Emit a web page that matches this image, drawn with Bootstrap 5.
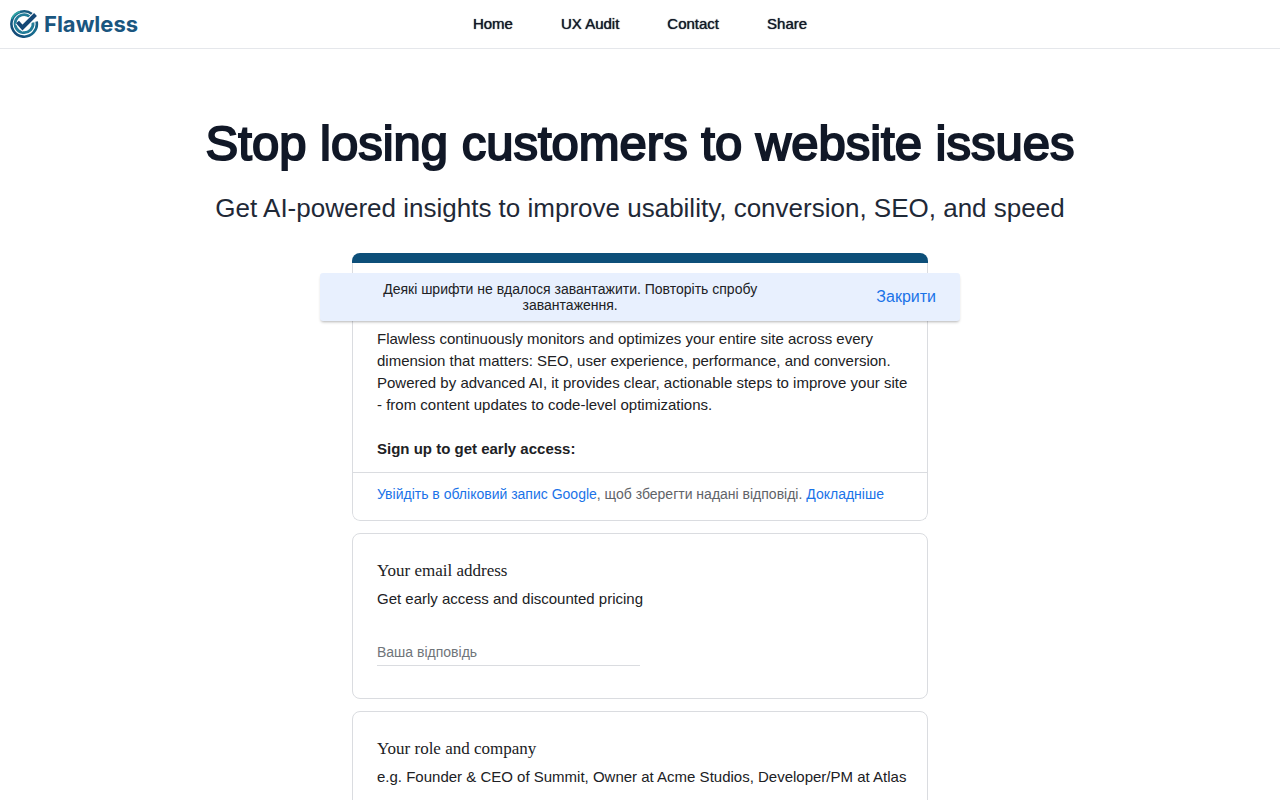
<!DOCTYPE html>
<html lang="en">
<head>
<meta charset="utf-8">
<meta name="viewport" content="width=device-width, initial-scale=1">
<title>Flawless</title>
<link href="https://cdn.jsdelivr.net/npm/bootstrap@5.3.0/dist/css/bootstrap.min.css" rel="stylesheet">
<style>
  body { font-family: "Liberation Sans", Arial, sans-serif; color: #202124; }
  .site-header { min-height: 49px; border-color: #e5e7eb !important; }
  .brand-logo { height: 30px; color: #1a567f; font: bold 22px/30px "Inter", sans-serif; text-decoration: none; }
  .site-nav { gap: 48px; }
  .site-nav a { color: #111827; font-size: 15px; line-height: 24px; text-decoration: none; text-shadow: 0 0 1px #111827; }
  .hero { padding-top: 64px; }
  .hero h1 { font-size: 49px; line-height: 60px; font-weight: 400; color: #111827; -webkit-text-stroke: 2px #111827; }
  .hero p { font-size: 26px; line-height: 38px; color: #1f2937; padding-bottom: 26px; }
  .form-column { max-width: 640px; }
  .form-cards { padding: 0 32px; display: grid; gap: 12px; }
  .form-panel { border: 1px solid #dadce0; border-radius: 8px; }
  .intro-panel { border: 0; overflow: hidden; }
  .intro-panel::before { content: ""; display: block; height: 10px; background: #0d4f79; }
  .intro-body { border: 1px solid #dadce0; border-top: 0; border-radius: 0 0 8px 8px; }
  .intro-copy { padding: 65px 16px 12px 24px; font-size: 15px; line-height: 22px; }
  .signin { padding: 10px 24px 14px; border-color: #dadce0 !important; font-size: 14px; line-height: 23px; color: #5f6368; }
  .signin a, .notice button { color: #1a73e8; text-decoration: none; }
  .question { padding: 24px 16px 32px 24px; }
  .question label { font: 17px/26px "Liberation Serif", serif; }
  .question p { font-size: 15px; line-height: 22px; margin: 4px 0 30px; }
  .question input { width: 263px; max-width: 100%; border: 0; border-bottom: 1px solid #dadce0; font-size: 14px; line-height: 24px; padding: 0 0 1px; color: #202124; background: transparent; }
  .question input::placeholder { color: #70757a; opacity: 1; }
  .notice { top: 20px; min-height: 48px; background: #e8f0fe; border-radius: 3px; box-shadow: 0 2px 3px -1px rgba(0,0,0,.3); font-size: 14px; line-height: 16px; padding: 0 24px; }
  .notice-text { padding: 0 116px 0 36px; }
  .notice button { font-size: 16px; line-height: 24px; }
</style>
</head>
<body>
<header class="site-header border-bottom d-grid align-items-center position-relative">
  <nav class="site-nav d-flex justify-content-center" aria-label="Main">
    <a href="#">Home</a><a href="#">UX Audit</a><a href="#">Contact</a><a href="#">Share</a>
  </nav>
  <a href="#" class="brand-logo d-flex align-items-center position-absolute start-0 ms-2">
    <svg width="32" height="30" viewBox="0 0 32 30" fill="none" aria-hidden="true">
      <defs><linearGradient id="ring" x1="0" y1="1" x2="1" y2="0"><stop stop-color="#123f70"/><stop offset=".55" stop-color="#176f91"/><stop offset="1" stop-color="#17486f"/></linearGradient></defs>
      <path d="M24 5A12.7 12.700 0 1 0 28.600 12.500" stroke="url(#ring)" stroke-width="2.600"/>
      <path d="M21.500 7.500A9 9 0 1 0 25 13.500" stroke="#227c98" stroke-width="2.800"/>
      <path d="M3.500 10A12.700 12.700 0 0 1 12 2.700" stroke="#32a7a5" stroke-width="1.600"/>
      <path d="M9.500 13L14.500 18.500L27.500 5.500" stroke="#fff" stroke-width="6"/>
      <path d="M9.500 13L14.500 18.500L27.500 5.500" stroke="#154876" stroke-width="4"/>
    </svg>
    <span class="ps-1">Flawless</span>
  </a>
</header>
<main>
  <section class="hero text-center">
    <h1 class="m-0">Stop losing customers to website issues</h1>
    <p class="m-0 pt-3">Get AI-powered insights to improve usability, conversion, SEO, and speed</p>
  </section>
  <form class="form-column mx-auto position-relative">
    <div class="form-cards">
      <section class="form-panel intro-panel">
        <div class="intro-body">
          <div class="intro-copy">
            <p class="m-0">Flawless continuously monitors and optimizes your entire site across every dimension that matters: SEO, user experience, performance, and conversion. Powered by advanced AI, it provides clear, actionable steps to improve your site - from content updates to code-level optimizations.</p>
            <br>
            <strong>Sign up to get early access:</strong>
          </div>
          <div class="signin border-top" lang="uk"><a href="#">Увійдіть в обліковий запис Google</a>, щоб зберегти надані відповіді. <a href="#">Докладніше</a></div>
        </div>
      </section>
      <section class="form-panel question">
        <label for="email" class="d-block">Your email address</label>
        <p id="email-help">Get early access and discounted pricing</p>
        <input id="email" type="text" class="d-block" placeholder="Ваша відповідь" aria-describedby="email-help">
      </section>
      <section class="form-panel question">
        <label for="role" class="d-block">Your role and company</label>
        <p id="role-help">e.g. Founder &amp; CEO of Summit, Owner at Acme Studios, Developer/PM at Atlas</p>
        <input id="role" type="text" class="d-block" placeholder="Ваша відповідь" aria-describedby="role-help">
      </section>
    </div>
    <div class="notice position-absolute start-0 w-100 d-flex align-items-center" role="alert" lang="uk">
      <span class="notice-text flex-grow-1 text-center">Деякі шрифти не вдалося завантажити. Повторіть спробу завантаження.</span>
      <button type="button" class="btn p-0 border-0">Закрити</button>
    </div>
  </form>
</main>
<script src="https://cdn.jsdelivr.net/npm/bootstrap@5.3.0/dist/js/bootstrap.bundle.min.js"></script>
</body>
</html>
